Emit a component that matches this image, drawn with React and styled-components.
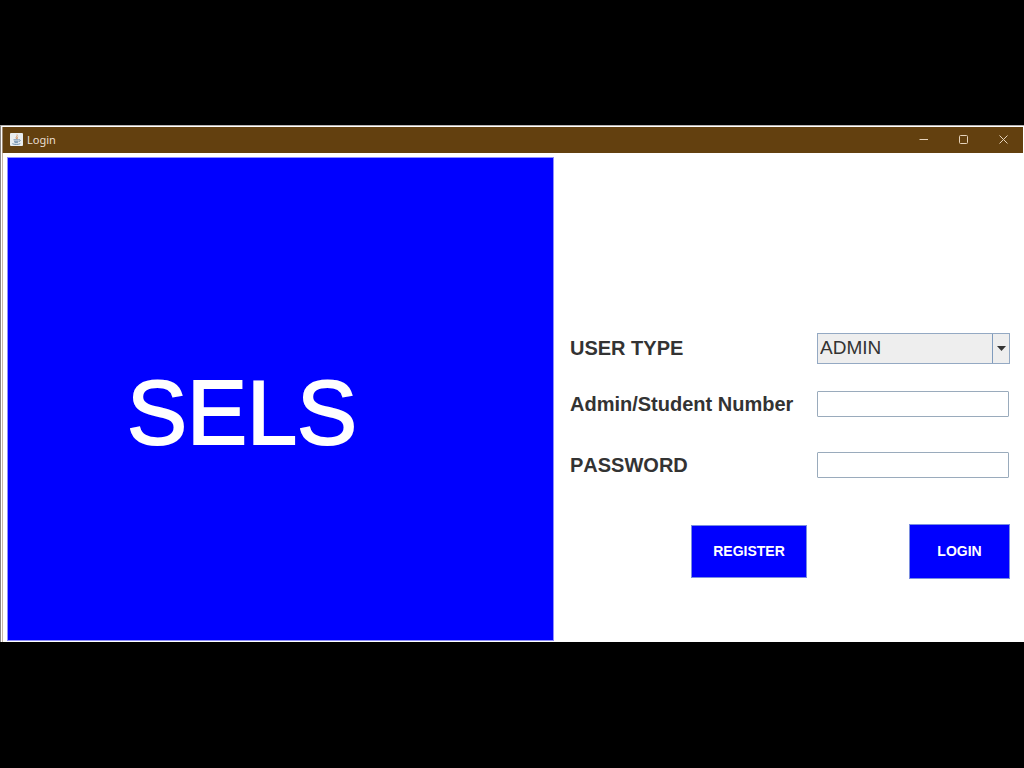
import React from "react";
import styled, { createGlobalStyle } from "styled-components";

const GlobalStyle = createGlobalStyle`
  * { box-sizing: border-box; }
  body {
    margin: 0;
    background: #000;
    font-family: "Liberation Sans", Arial, sans-serif;
    font-kerning: none;
  }
`;

const Page = styled.div`
  min-height: 100vh;
  display: flex;
  flex-direction: column;
  justify-content: center;
  padding-bottom: 2px;
`;

const Window = styled.main`
  background: #fff;
  border-top: 1px solid #b4b0ae;
  border-left: 1px solid #8a8583;
  padding: 1px 1px 0;
`;

const TitleBar = styled.header`
  display: flex;
  align-items: center;
  height: 26px;
  padding: 0 0 0 7px;
  background: #63400f;
  border-left: 1px solid #a08b75;
  color: #e9dfd3;
`;

const Title = styled.h1`
  flex: 1;
  margin: 0 0 0 4px;
  font: 400 11px/16px "Noto Sans", "Open Sans", sans-serif;
`;

const WindowButton = styled.button`
  width: 40px;
  height: 26px;
  padding: 0;
  border: 0;
  background: none;
  color: #e6d3bb;
  display: grid;
  place-items: center;
`;

const Content = styled.div`
  display: grid;
  grid-template-columns: 547fr 469fr;
  min-height: 489px;
  padding: 4px 0 1px 4px;
  border-left: 1px solid #c4b5a8;
`;

const Brand = styled.section`
  display: flex;
  align-items: center;
  justify-content: center;
  padding: 28px 77px 0 0;
  background: #00f;
  border: 1px solid #8f8fff;
  color: #fff;
`;

const BrandName = styled.h2`
  margin: 0;
  font-size: 90px;
  line-height: 100px;
  font-weight: 400;
  -webkit-text-stroke: 2px #fff;
`;

const Form = styled.form`
  padding: 176px 13px 62px 16px;
`;

const Field = styled.div`
  display: grid;
  grid-template-columns: 1fr 193px;
  align-items: center;
  margin-bottom: ${(p) => p.$gap}px;
`;

const Label = styled.label`
  font-size: 20px;
  line-height: 24px;
  font-weight: 700;
  color: #333;
  white-space: nowrap;
`;

const SelectBox = styled.div`
  position: relative;
  height: 31px;
`;

const Select = styled.select`
  appearance: none;
  width: 100%;
  height: 100%;
  padding: 0 20px 0 2px;
  border: 1px solid #94a9c3;
  border-radius: 0;
  background: #eee;
  color: #333;
  font: 400 19px/24px "Liberation Sans", Arial, sans-serif;
`;

const Arrow = styled.span`
  position: absolute;
  inset: 1px 1px 1px auto;
  width: 17px;
  display: grid;
  place-items: center;
  border-left: 1px solid #7f9bbd;
  pointer-events: none;
`;

const Input = styled.input`
  width: 192px;
  height: 26px;
  padding: 0 4px;
  border: 1px solid #9aabbc;
  border-radius: 1px;
  background: #fff;
  color: #333;
  font: 400 16px/20px "Liberation Sans", Arial, sans-serif;
`;

const Actions = styled.div`
  display: flex;
  justify-content: flex-end;
  align-items: center;
  gap: 102px;
`;

const Button = styled.button`
  width: ${(p) => p.$width}px;
  height: ${(p) => p.$height}px;
  padding: 0;
  border: 1px solid #7a8ee0;
  background: #00f;
  color: #fff;
  font: 700 14px/20px "Liberation Sans", Arial, sans-serif;
`;

const JavaIcon = () => (
  <svg width="13" height="13" viewBox="0 0 13 13" aria-hidden="true">
    <rect width="13" height="13" rx="1" fill="#e9edf0" />
    <path d="M7 1.5C8 3 5 4 6.5 6M8.2 3.5C6.8 4.2 7.6 5 7.2 6" fill="none" stroke="#d08a55" strokeWidth="0.9" />
    <path d="M3.5 6.8h5.3M4 8.3h4.4M4.5 9.6h3.4M2.3 10.7c2 1 6 1 8 0M9 6.8c1.8-.4 1.6 1.5-.2 1.8" fill="none" stroke="#6487a8" strokeWidth="0.9" />
  </svg>
);

const controls = [
  { name: "Minimize", d: "M0.5 4.5h8.5" },
  { name: "Maximize", d: "M1.5 0.5h6a1 1 0 0 1 1 1v6a1 1 0 0 1-1 1h-6a1 1 0 0 1-1-1v-6a1 1 0 0 1 1-1z" },
  { name: "Close", d: "M0.5 0.5l8 8M8.5 0.5l-8 8" },
];

export default function App() {
  return (
    <Page>
      <GlobalStyle />
      <Window>
        <TitleBar>
          <JavaIcon />
          <Title>Login</Title>
          {controls.map((c) => (
            <WindowButton key={c.name} type="button" aria-label={c.name}>
              <svg width="9" height="9" viewBox="0 0 9 9" fill="none" stroke="currentColor">
                <path d={c.d} />
              </svg>
            </WindowButton>
          ))}
        </TitleBar>
        <Content>
          <Brand>
            <BrandName>SELS</BrandName>
          </Brand>
          <Form onSubmit={(e) => e.preventDefault()}>
            <Field $gap={27}>
              <Label htmlFor="type">USER TYPE</Label>
              <SelectBox>
                <Select id="type" defaultValue="ADMIN">
                  <option>ADMIN</option>
                  <option>STUDENT</option>
                </Select>
                <Arrow>
                  <svg width="9" height="5" viewBox="0 0 9 5" aria-hidden="true">
                    <path d="M0 0h9L4.5 5z" fill="#333" />
                  </svg>
                </Arrow>
              </SelectBox>
            </Field>
            <Field $gap={35}>
              <Label htmlFor="number">Admin/Student Number</Label>
              <Input id="number" type="text" />
            </Field>
            <Field $gap={46}>
              <Label htmlFor="password">PASSWORD</Label>
              <Input id="password" type="password" />
            </Field>
            <Actions>
              <Button type="button" $width={116} $height={53}>REGISTER</Button>
              <Button type="submit" $width={101} $height={55}>LOGIN</Button>
            </Actions>
          </Form>
        </Content>
      </Window>
    </Page>
  );
}
